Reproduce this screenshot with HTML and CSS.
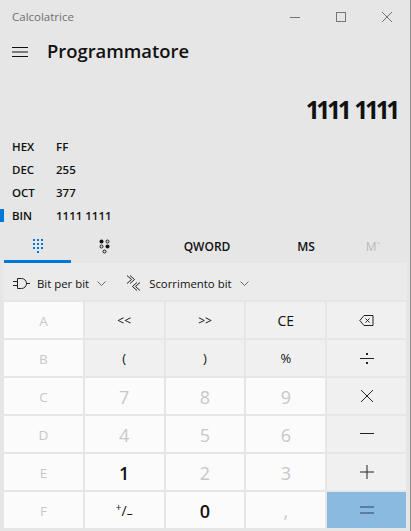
FILE: index.html
```html
<!DOCTYPE html>
<html lang="it">
<head>
    <meta charset="UTF-8">
    <title>Calcolatrice</title>
    <link rel="stylesheet" href="styles.css">
</head>
<body>
    <div class="calc">
        <!-- TITLE BAR -->
        <div class="titlebar">
            <span class="titlebar__name">Calcolatrice</span>
            <div class="titlebar__controls">
                <svg class="winicon" width="12" height="12" viewBox="0 0 12 12"><line x1="1" y1="6.5" x2="11" y2="6.5"/></svg>
                <svg class="winicon" width="12" height="12" viewBox="0 0 12 12"><rect x="1.5" y="1.5" width="9" height="9"/></svg>
                <svg class="winicon" width="12" height="12" viewBox="0 0 12 12"><line x1="1" y1="1" x2="11" y2="11"/><line x1="11" y1="1" x2="1" y2="11"/></svg>
            </div>
        </div>

        <!-- MODE HEADER -->
        <div class="header">
            <svg class="menuicon" width="16" height="10" viewBox="0 0 16 10">
                <line x1="0" y1="0.5" x2="16" y2="0.5"/>
                <line x1="0" y1="5" x2="16" y2="5"/>
                <line x1="0" y1="9.5" x2="16" y2="9.5"/>
            </svg>
            <span class="header__title">Programmatore</span>
        </div>

        <div class="display">1111 1111</div>

        <!-- RADIX LIST -->
        <ul class="radix">
            <li class="radix__row"><span class="radix__label">HEX</span><span>FF</span></li>
            <li class="radix__row"><span class="radix__label">DEC</span><span>255</span></li>
            <li class="radix__row"><span class="radix__label">OCT</span><span>377</span></li>
            <li class="radix__row radix__row--active"><span class="radix__label">BIN</span><span>1111 1111</span></li>
        </ul>

        <!-- TABS -->
        <div class="tabs">
            <div class="tab tab--active">
                <svg width="10" height="14" viewBox="0 0 10 14" fill="#0078d7">
                    <rect x="0" y="0" width="2" height="2"/><rect x="4" y="0" width="2" height="2"/><rect x="8" y="0" width="2" height="2"/>
                    <rect x="0" y="4" width="2" height="2"/><rect x="4" y="4" width="2" height="2"/><rect x="8" y="4" width="2" height="2"/>
                    <rect x="0" y="8" width="2" height="2"/><rect x="4" y="8" width="2" height="2"/><rect x="8" y="8" width="2" height="2"/>
                    <rect x="4" y="12" width="2" height="2"/>
                </svg>
            </div>
            <div class="tab">
                <svg width="11" height="15" viewBox="0 0 11 15">
                    <circle cx="2.500" cy="2.500" r="2" fill="#111"/>
                    <circle cx="8.500" cy="2.500" r="1.500" fill="none" stroke="#111"/>
                    <circle cx="2.500" cy="7.500" r="1.500" fill="none" stroke="#111"/>
                    <circle cx="8.500" cy="7.500" r="2" fill="#111"/>
                    <circle cx="5.500" cy="12.500" r="1.500" fill="none" stroke="#111"/>
                </svg>
            </div>
            <div class="tab tab--word">QWORD</div>
            <div class="tab tab--ms">MS</div>
            <div class="tab tab--mem">M<sup class="tab__sup">ˇ</sup></div>
        </div>

        <!-- BITWISE TOOLBAR -->
        <div class="toolbar">
            <div class="toolbar__item">
                <svg class="toolbar__icon" width="17" height="11" viewBox="0 0 17 11">
                    <path d="M4.500 .5h4a5 5 0 0 1 0 10h-4z"/>
                    <path d="M0 3.500h4.500M0 7.500h4.500M13.500 5.500h3.500"/>
                </svg>
                <span>Bit per bit</span>
                <svg class="chevron" width="9" height="5" viewBox="0 0 9 5"><path d="M.5 .5l4 4 4-4"/></svg>
            </div>
            <div class="toolbar__item">
                <svg class="toolbar__icon" width="13" height="16" viewBox="0 0 13 16">
                    <path d="M0 .5l4.500 4-4.500 4M3 .5l4.500 4-4.500 4"/>
                    <path d="M13 7.500l-4.500 4 4.500 4M10 7.500l-4.500 4 4.500 4"/>
                </svg>
                <span class="toolbar__label--wide">Scorrimento bit</span>
                <svg class="chevron" width="9" height="5" viewBox="0 0 9 5"><path d="M.5 .5l4 4 4-4"/></svg>
            </div>
        </div>

        <!-- KEYPAD -->
        <div class="keypad">
            <button class="key key--off key--hex">A</button>
            <button class="key key--alt key--sm">&lt;&lt;</button>
            <button class="key key--alt key--sm">&gt;&gt;</button>
            <button class="key key--alt key--ce">CE</button>
            <button class="key key--alt">
                <svg class="keyicon" width="15" height="11" viewBox="0 0 15 11"><path d="M14 .5H5L.8 5.500 5 10.500h9z"/><path d="M6.500 3.500l4 4M10.500 3.500l-4 4"/></svg>
            </button>

            <button class="key key--off key--hex">B</button>
            <button class="key key--alt">(</button>
            <button class="key key--alt">)</button>
            <button class="key key--alt">%</button>
            <button class="key key--alt">
                <svg class="keyicon" width="14" height="13" viewBox="0 0 14 13"><path d="M0 6.500h14"/><rect class="keyicon__dot" x="6" y="1" width="2" height="2"/><rect class="keyicon__dot" x="6" y="10" width="2" height="2"/></svg>
            </button>

            <button class="key key--off key--hex">C</button>
            <button class="key key--num key--off">7</button>
            <button class="key key--num key--off">8</button>
            <button class="key key--num key--off">9</button>
            <button class="key key--alt">
                <svg class="keyicon" width="14" height="14" viewBox="0 0 14 14"><path d="M1 1l12 12M13 1L1 13"/></svg>
            </button>

            <button class="key key--off key--hex">D</button>
            <button class="key key--num key--off">4</button>
            <button class="key key--num key--off">5</button>
            <button class="key key--num key--off">6</button>
            <button class="key key--alt">
                <svg class="keyicon" width="14" height="14" viewBox="0 0 14 14"><path d="M0 6.500h14"/></svg>
            </button>

            <button class="key key--off key--hex">E</button>
            <button class="key key--num">1</button>
            <button class="key key--num key--off">2</button>
            <button class="key key--num key--off">3</button>
            <button class="key key--alt">
                <svg class="keyicon" width="14" height="14" viewBox="0 0 14 14"><path d="M0 7h14M7 0v14"/></svg>
            </button>

            <button class="key key--off key--hex">F</button>
            <button class="key key--sign"><span class="key__plus">+</span>/<span class="key__minus">–</span></button>
            <button class="key key--num">0</button>
            <button class="key key--num key--off">,</button>
            <button class="key key--equals">
                <svg class="keyicon" width="14" height="8" viewBox="0 0 14 8"><path d="M0 1h14M0 7h14"/></svg>
            </button>
        </div>
    </div>
</body>
</html>
```

FILE: styles.css
```css
* {
    box-sizing: border-box;
}

body {
    margin: 0;
    background-color: #e6e6e6;
    font-family: "Open Sans", "Noto Sans", sans-serif;
    color: #111;
}

.calc {
    width: 411px;
    height: 531px;
    display: flex;
    flex-direction: column;
    border-right: 1px solid #8c8c8c;
    overflow: hidden;
}

.titlebar {
    height: 33px;
    flex: none;
    display: flex;
    align-items: center;
    justify-content: space-between;
    padding-left: 12px;
}
.titlebar__name {
    font-size: 11.5px;
    color: #6f6f6f;
}
.titlebar__controls {
    display: flex;
    gap: 34px;
    padding-right: 17px;
}

.winicon {
    display: block;
    fill: none;
    stroke: #757575;
    stroke-width: 1;
}

.header {
    height: 38px;
    flex: none;
    display: flex;
    align-items: center;
    gap: 19px;
    padding: 0 0 1px 12px;
}
.header__title {
    font-size: 18.4px;
    font-weight: 600;
    margin-top: -2px;
}

.menuicon {
    display: block;
    stroke: #111;
    stroke-width: 1;
}

.display {
    height: 64px;
    flex: none;
    padding: 24px 13px 0 0;
    text-align: right;
    font-size: 24.5px;
    line-height: 30px;
    font-weight: 700;
    letter-spacing: -3.350px;
    word-spacing: 3px;
}

.radix {
    list-style: none;
    margin: 0;
    padding: 0;
    flex: none;
    font-size: 11.5px;
    font-weight: 600;
}
.radix__row {
    height: 23px;
    display: flex;
    align-items: center;
    padding-left: 12px;
    position: relative;
}
.radix__label {
    width: 44px;
}
.radix__row--active::before {
    content: "";
    position: absolute;
    left: 0;
    top: 5px;
    width: 4px;
    height: 13px;
    background-color: #0078d7;
}

.tabs {
    height: 36px;
    flex: none;
    display: flex;
    padding-left: 4px;
    font-size: 12px;
    font-weight: 600;
}
.tab {
    width: 67px;
    padding-top: 3px;
    display: flex;
    align-items: center;
    justify-content: center;
}
.tab--active {
    border-bottom: 3px solid #0078d7;
    padding-top: 5px;
}
.tab--word {
    width: 138px;
}
.tab--ms {
    width: 60px;
}
.tab--mem {
    width: 74px;
    color: #b9b9b9;
    font-weight: 400;
}
.tab__sup {
    font-size: 9px;
    line-height: 1;
}

.toolbar {
    height: 37px;
    flex: none;
    margin: 0 3px;
    background-color: #ebebeb;
    display: flex;
    align-items: center;
    gap: 21px;
    padding: 3px 0 0 10px;
    font-size: 11.400px;
}
.toolbar__item {
    display: flex;
    align-items: center;
    gap: 7px;
}
.toolbar__label--wide {
    margin-left: 2px;
}
.toolbar__icon {
    display: block;
    fill: none;
    stroke: #222;
    stroke-width: 1;
}

.chevron {
    display: block;
    margin-left: 1px;
    fill: none;
    stroke: #666;
    stroke-width: 1;
}

.keypad {
    flex: none;
    width: 402px;
    margin: 2px 0 0 4px;
    display: grid;
    grid-template-columns: repeat(5, 1fr);
    grid-auto-rows: 36px;
    gap: 2px;
}

.key {
    padding: 0;
    border: 0;
    display: flex;
    align-items: center;
    justify-content: center;
    font-family: inherit;
    font-size: 12px;
    color: #111;
    background-color: #fbfbfb;
}
.key--off {
    color: #c8c8c8;
}
.key--hex {
    font-size: 13.500px;
    padding-top: 2px;
}
.key--alt {
    background-color: #f0f0f0;
    font-size: 13px;
}
.key--sm {
    font-size: 12px;
}
.key--ce {
    font-size: 14px;
}
.key--num {
    font-size: 18px;
    font-weight: 600;
    padding-top: 2px;
}
.key--num.key--off {
    font-weight: 400;
}
.key--sign {
    font-size: 14px;
    align-items: center;
}
.key__plus {
    font-size: 10px;
    margin-bottom: 6px;
}
.key__minus {
    font-size: 12px;
    margin-top: 6px;
}
.key--equals {
    background-color: #8abae0;
}

.keyicon {
    display: block;
    fill: none;
    stroke: #222;
    stroke-width: 1;
}
.keyicon__dot {
    fill: #222;
    stroke: none;
}
.key--equals .keyicon {
    stroke: #4b6b84;
    stroke-width: 1.500;
}
```
